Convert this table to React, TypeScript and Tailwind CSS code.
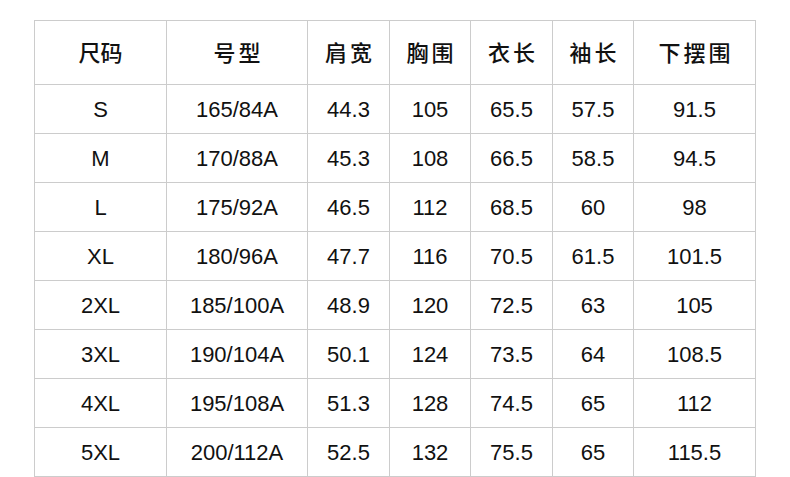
const HEAD = ["尺码", "号型", "肩宽", "胸围", "衣长", "袖长", "下摆围"];

const ROWS = [
  ["S", "165/84A", "44.3", "105", "65.5", "57.5", "91.5"],
  ["M", "170/88A", "45.3", "108", "66.5", "58.5", "94.5"],
  ["L", "175/92A", "46.5", "112", "68.5", "60", "98"],
  ["XL", "180/96A", "47.7", "116", "70.5", "61.5", "101.5"],
  ["2XL", "185/100A", "48.9", "120", "72.5", "63", "105"],
  ["3XL", "190/104A", "50.1", "124", "73.5", "64", "108.5"],
  ["4XL", "195/108A", "51.3", "128", "74.5", "65", "112"],
  ["5XL", "200/112A", "52.5", "132", "75.5", "65", "115.5"],
];

export default function App() {
  return (
    <div className="w-[790px] h-[477px] bg-white overflow-hidden">
      <div
        className="ml-[34px] mt-[20px] w-[722px] grid grid-cols-[132px_141px_82px_81px_82px_81px_122px] border-l border-t border-[#cccccc] text-[#111111]"
        style={{ fontFamily: '"Liberation Sans", "Noto Sans CJK SC", sans-serif' }}
      >
        {/* header */}
        {HEAD.map((h, i) => (
          <div
            key={h}
            className={`h-[64px] pt-[2px] flex items-center justify-center border-r border-b border-[#cccccc] text-[22px] font-medium ${
              i === 0 ? "" : "tracking-[3px] pl-[3px]"
            }`}
          >
            {h}
          </div>
        ))}

        {/* body */}
        {ROWS.map((row) =>
          row.map((c, j) => (
            <div
              key={row[0] + j}
              className="h-[49px] flex items-center justify-center border-r border-b border-[#cccccc] text-[22px]"
            >
              {c}
            </div>
          ))
        )}
      </div>
    </div>
  );
}
